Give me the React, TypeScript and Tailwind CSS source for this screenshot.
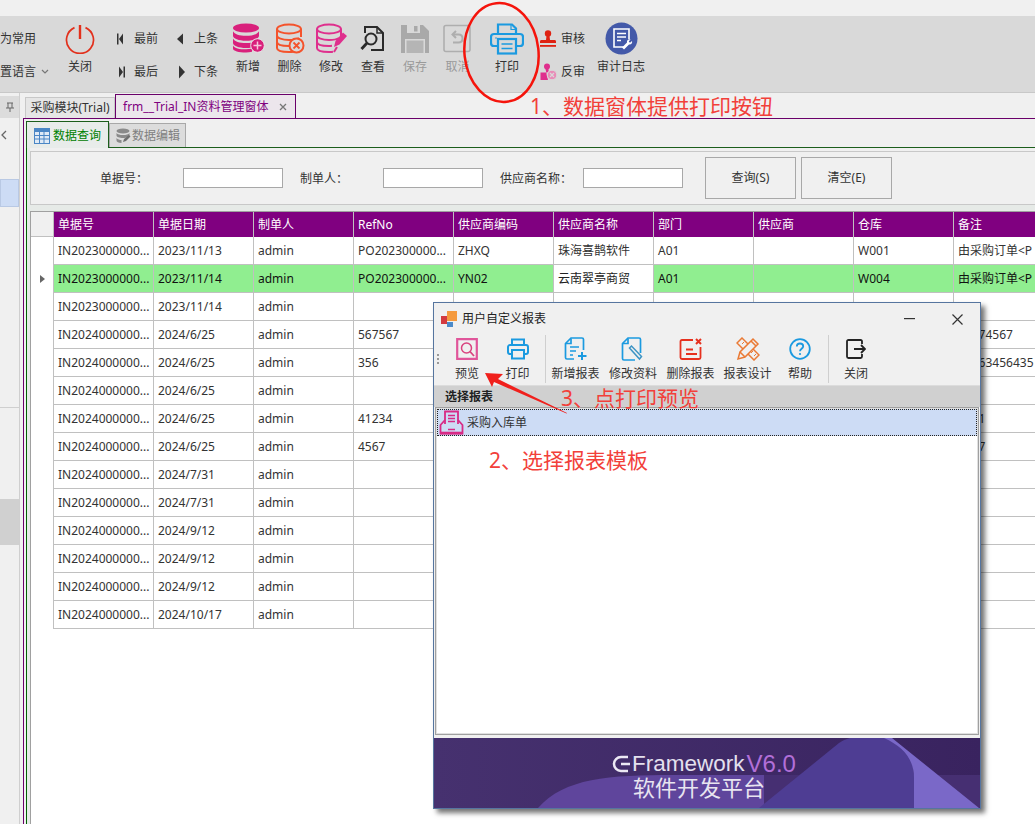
import type { ReactNode } from "react"

const COLS = ["单据号", "单据日期", "制单人", "RefNo", "供应商编码", "供应商名称", "部门", "供应商", "仓库", "备注"]
const ID23 = "IN2023000000..."
const ID24 = "IN2024000000..."
const PO = "PO202300000..."

const ROWS: string[][] = [
  [ID23, "2023/11/13", "admin", PO, "ZHXQ", "珠海喜鹊软件", "A01", "", "W001", "由采购订单<P"],
  [ID23, "2023/11/14", "admin", PO, "YN02", "云南翠亭商贸", "A01", "", "W004", "由采购订单<P"],
  [ID23, "2023/11/14", "admin", "", "", "云南翠亭商贸", "", "云南翠亭", "", ""],
  [ID24, "2024/6/25", "admin", "567567", "", "", "", "", "", "45674567"],
  [ID24, "2024/6/25", "admin", "356", "", "", "", "", "", "24563456435"],
  [ID24, "2024/6/25", "admin", "", "", "", "", "", "", ""],
  [ID24, "2024/6/25", "admin", "41234", "", "", "", "", "", "1231"],
  [ID24, "2024/6/25", "admin", "4567", "", "", "", "", "", "4567"],
  [ID24, "2024/7/31", "admin", "", "", "", "", "", "", ""],
  [ID24, "2024/7/31", "admin", "", "", "", "", "", "", ""],
  [ID24, "2024/9/12", "admin", "", "", "", "", "", "", ""],
  [ID24, "2024/9/12", "admin", "", "", "", "", "", "", ""],
  [ID24, "2024/9/12", "admin", "", "", "", "", "", "", ""],
  [ID24, "2024/10/17", "admin", "", "", "", "", "", "", ""],
]

function DbStack({ fill }: { fill: string }) {
  return (
    <g fill={fill}>
      <ellipse cx="14" cy="5" rx="13" ry="4.6" />
      <path d="M1 8.2c1.5 3 6.5 4.6 13 4.6s11.500-1.600 13-4.600v4.600c0 2.800-5.800 5-13 5s-13-2.200-13-5z" />
      <path d="M1 15.500c1.500 3 6.500 4.600 13 4.600s11.500-1.600 13-4.600v4.600c0 2.800-5.800 5-13 5s-13-2.200-13-5z" />
      <path d="M1 22.500c1.500 3 6.500 3.800 13 3.800 2 0 4-.2 6-.5v3c-2 .4-4 .7-6 .7-7.200 0-13-1.500-13-4z" />
    </g>
  )
}

function DbOutline({ color }: { color: string }) {
  return (
    <g fill="none" stroke={color} strokeWidth="2">
      <ellipse cx="14" cy="6" rx="12" ry="4.500" />
      <path d="M2 6v19c0 2.500 5 4 12 4 1.500 0 3-.1 4-.3M26 6v8M2 12.500c0 2.500 5 4.500 12 4.500 4 0 8-.7 10-2M2 19c0 2.500 5 4 12 4 1 0 2-.1 3-.2" />
    </g>
  )
}

const icons: Record<string, ReactNode> = {
  power: (
    <svg width="30" height="30" viewBox="0 0 30 30" fill="none" stroke="#e2301c">
      <path d="M9.500 3.600a13.500 13.500 0 1 0 11 0" strokeWidth="1.700" />
      <path d="M15 1v14" strokeWidth="2.400" />
    </svg>
  ),
  dbAdd: (
    <svg width="33" height="31" viewBox="0 0 33 31">
      <DbStack fill="#d9207c" />
      <circle cx="25.500" cy="22.500" r="6.800" fill="#d9207c" stroke="#e8e8e8" strokeWidth="1" />
      <path d="M25.500 18.500v8M21.500 22.500h8" stroke="#f5c8dd" strokeWidth="1.500" />
    </svg>
  ),
  dbDel: (
    <svg width="30" height="31" viewBox="0 0 30 31">
      <DbOutline color="#f4532c" />
      <circle cx="21.500" cy="22.500" r="7" fill="#d9d9d9" stroke="#f4532c" strokeWidth="2" />
      <path d="M18.500 19.500l6 6M24.500 19.500l-6 6" stroke="#f4532c" strokeWidth="1.800" />
    </svg>
  ),
  dbEdit: (
    <svg width="33" height="31" viewBox="0 0 33 31">
      <DbOutline color="#df2f8d" />
      <path d="M19 24l1.500-6L28 9.500l4 3.500-7.500 8.500z" fill="#df2f8d" />
      <path d="M19 29l3-5" stroke="#df2f8d" strokeWidth="2" />
    </svg>
  ),
  view: (
    <svg width="26" height="28" viewBox="0 0 26 28" fill="none" stroke="#2a2a2a" strokeWidth="2">
      <path d="M5 8V2h12l6 6v17H11" />
      <path d="M17 2v6h6" strokeWidth="1.500" />
      <circle cx="11" cy="14" r="5.500" />
      <path d="M7 18l-5.500 6" strokeWidth="2.800" />
    </svg>
  ),
  save: (
    <svg width="30" height="30" viewBox="0 0 30 30">
      <path d="M1 1h22l6 6v22H1z" fill="#a9a9a9" />
      <rect x="7" y="1" width="13" height="8" fill="#d9d9d9" />
      <rect x="14" y="2" width="3.500" height="5.500" fill="#a9a9a9" />
      <rect x="5" y="15" width="20" height="14" fill="#d9d9d9" />
      <rect x="6.500" y="16.500" width="17" height="12.500" fill="#b5b5b5" />
    </svg>
  ),
  undo: (
    <svg width="29" height="29" viewBox="0 0 29 29" fill="none" stroke="#aeaeae">
      <rect x="1" y="1.500" width="26" height="26" rx="2" strokeWidth="1.600" />
      <path d="M13 7l-3.500 3.500L13 14" strokeWidth="2" />
      <path d="M10 10.500h5.500c2.500 0 4 1.800 4 4s-1.500 4-4 4H10" strokeWidth="2" />
    </svg>
  ),
  print: (
    <svg width="34" height="32" viewBox="0 0 34 32" fill="none" stroke="#1b9ae0" strokeWidth="2.200">
      <path d="M8 11V1.500h14l4 4V11" />
      <path d="M21 2v4.500h5" strokeWidth="1.200" />
      <path d="M8 23H4c-1.700 0-3-1.300-3-3v-6c0-1.700 1.300-3 3-3h26c1.700 0 3 1.300 3 3v6c0 1.700-1.300 3-3 3h-4" />
      <rect x="8" y="16" width="18" height="14.500" />
      <path d="M11.500 21h11M11.500 25.500h11" strokeWidth="1.500" />
      <circle cx="6" cy="15" r=".8" fill="#1b9ae0" stroke="none" />
    </svg>
  ),
  stamp: (
    <svg width="20" height="18" viewBox="0 0 20 18">
      <circle cx="10" cy="3.500" r="3.200" fill="#df2212" />
      <path d="M8.500 6h3l.5 4h4.500c1 0 1.500.6 1.500 1.500V13H2v-1.500c0-.9.500-1.500 1.500-1.500H8z" fill="#df2212" />
      <rect x="2" y="15" width="16" height="1.800" fill="#df2212" />
    </svg>
  ),
  unstamp: (
    <svg width="20" height="18" viewBox="0 0 20 18">
      <circle cx="9" cy="3.500" r="3" fill="#df2f8d" />
      <path d="M7.500 6h3l.3 3.500H2.500v1V17h7.500z" fill="#df2f8d" />
      <circle cx="14" cy="12" r="4.800" fill="#e98bb8" stroke="#d9d9d9" />
      <path d="M12 10l4 4M16 10l-4 4" stroke="#d9d9d9" strokeWidth="1.200" />
    </svg>
  ),
  audit: (
    <svg width="33" height="33" viewBox="0 0 33 33">
      <circle cx="16.500" cy="16.500" r="16" fill="#4359a9" />
      <path d="M20 25H9V7h15v10" fill="none" stroke="#fff" strokeWidth="1.600" />
      <path d="M12 11.500h9M12 15h9M12 18.500h4" stroke="#fff" strokeWidth="1.300" />
      <path d="M17 25.500l5-5c-.5-2 1.500-3.800 3.500-3l-1.800 2 1.300 1.300 2-1.800c.7 2-1 4-3 3.500l-5 5z" fill="#fff" />
    </svg>
  ),
  preview: (
    <svg width="22" height="22" viewBox="0 0 22 22" fill="none" stroke="#e0559a">
      <path d="M1.200 1.200h19.600v19.600H1.200z" strokeWidth="2.200" />
      <circle cx="10.500" cy="10" r="5" strokeWidth="1.500" stroke="#d9437f" />
      <path d="M14 13.500l4 4.500" strokeWidth="1.800" stroke="#d9437f" />
    </svg>
  ),
  printSmall: (
    <svg width="22" height="22" viewBox="0 0 22 22" fill="none" stroke="#1b9ae0" strokeWidth="2">
      <path d="M5 7V1.500h12V7" />
      <path d="M5 16H3c-1.100 0-2-.9-2-2V9c0-1.100.9-2 2-2h16c1.100 0 2 .9 2 2v5c0 1.100-.9 2-2 2h-2" />
      <rect x="5" y="12" width="12" height="8.500" />
    </svg>
  ),
  docAdd: (
    <svg width="24" height="24" viewBox="0 0 24 24" fill="none" stroke="#1b9ae0" strokeWidth="1.700">
      <path d="M10 22H3c-1 0-1.500-.5-1.500-1.500V6.500L7 1h11c1 0 1.500.5 1.500 1.500V13" />
      <path d="M7 1.500v5H2" />
      <path d="M6 10h9M6 14h6M6 18h3" />
      <path d="M18 15v8M14 19h8.500" strokeWidth="2" />
    </svg>
  ),
  docEdit: (
    <svg width="24" height="24" viewBox="0 0 24 24" fill="none" stroke="#1b9ae0" strokeWidth="1.700">
      <path d="M14 23H3c-1 0-1.500-.5-1.500-1.500V6.500L7 1h11c1 0 1.500.5 1.500 1.500V16" />
      <path d="M7 1.500v5H2" />
      <path d="M8.500 11l2-2 10 10.500-2 2.500z" strokeWidth="1.500" stroke="#3d94c4" />
    </svg>
  ),
  docDel: (
    <svg width="24" height="22" viewBox="0 0 24 22" fill="none" stroke="#e6301e" strokeWidth="1.800">
      <path d="M14 2H3c-1 0-1.500.5-1.500 1.500v16c0 1 .5 1.500 1.500 1.500h17c1 0 1.500-.5 1.500-1.500V9" />
      <path d="M7 11.500h7M7 16h11" />
      <path d="M17 1l5 5M22 1l-5 5" strokeWidth="2" />
    </svg>
  ),
  design: (
    <svg width="24" height="24" viewBox="0 0 24 24" fill="none" stroke="#ea7a35" strokeWidth="1.500">
      <path d="M6 1l17 17-5 5L1 6z" />
      <path d="M6 7l2-2M9 10l2-2M12 13l2-2M15 16l2-2M18 19l2-2" strokeWidth="1" />
      <path d="M2 22l2-7L17 2l5 5L9 20z" fill="#f0f0f0" />
      <path d="M15 4l5 5M4 15l5 5" />
    </svg>
  ),
  help: (
    <svg width="22" height="22" viewBox="0 0 22 22" fill="none" stroke="#1b9ae0">
      <circle cx="11" cy="11" r="9.800" strokeWidth="1.800" />
      <path d="M7.800 8.500c0-2 1.400-3 3.200-3s3.200 1.100 3.200 2.800c0 2.500-3.200 2.500-3.200 5" strokeWidth="1.800" />
      <circle cx="11" cy="16" r="1.100" fill="#1b9ae0" stroke="none" />
    </svg>
  ),
  exit: (
    <svg width="20" height="20" viewBox="0 0 20 20" fill="none" stroke="#222" strokeWidth="1.800">
      <path d="M16 5V2.500c0-.8-.5-1.500-1.500-1.500H2.500C1.600 1 1 1.600 1 2.500v15c0 .9.600 1.500 1.500 1.500h12c1 0 1.500-.7 1.500-1.500V15" />
      <path d="M8 10h11M15 6l4 4-4 4" />
    </svg>
  ),
}

function NavIcon({ kind }: { kind: "first" | "prev" | "last" | "next" }) {
  return (
    <svg width="14" height="14" viewBox="0 0 14 14" fill="#333" className="shrink-0">
      {kind === "first" && <path d="M5 1.500h1.500v11H5zM11 1.500v11L7 7z" />}
      {kind === "prev" && <path d="M10 1.500v11L4 7z" />}
      {kind === "last" && <path d="M11.500 1.500H13v11h-1.500zM7 1.500v11l4-5.500z" />}
      {kind === "next" && <path d="M6 0.500v13L12 7z" />}
    </svg>
  )
}

function ToolBtn({ icon, label, w = "w-[42px]", muted }: { icon: ReactNode; label: string; w?: string; muted?: boolean }) {
  return (
    <div className={`flex shrink-0 flex-col items-center pt-[7px] ${w}`}>
      <div className="flex h-[31px] items-center justify-center">{icon}</div>
      <span className={`mt-[5px] whitespace-nowrap leading-[16px] ${muted ? "text-[#9a9a9a]" : "text-[#333]"}`}>{label}</span>
    </div>
  )
}

function NavBtn({ kind, label, gap = "gap-[7px]" }: { kind: "first" | "prev" | "last" | "next"; label: string; gap?: string }) {
  return (
    <div className={`flex h-[33px] items-center ${gap}`}>
      <NavIcon kind={kind} />
      <span className="leading-[16px] text-[#333]">{label}</span>
    </div>
  )
}

function Toolbar() {
  return (
    <div className="flex h-[77px] shrink-0 items-start border-b border-[#c8c8c8] bg-[#d9d9d9]">
      <div className="w-[59px] shrink-0 overflow-hidden pt-[6px]">
        <div className="flex h-[33px] items-center whitespace-nowrap leading-[16px] text-[#333]">为常用</div>
        <div className="flex h-[33px] items-center whitespace-nowrap leading-[16px] text-[#333]">
          置语言
          <svg width="8" height="6" viewBox="0 0 8 6" fill="none" stroke="#777" strokeWidth="1.200" className="ml-[5px]">
            <path d="M1 1l3 3 3-3" />
          </svg>
        </div>
      </div>
      <ToolBtn icon={icons.power} label="关闭" />
      <div className="ml-[11px] grid w-[115px] shrink-0 grid-cols-[61px_54px] pt-[6px]">
        <NavBtn kind="first" label="最前" gap="gap-[8px]" />
        <NavBtn kind="prev" label="上条" />
        <NavBtn kind="last" label="最后" gap="gap-[8px]" />
        <NavBtn kind="next" label="下条" />
      </div>
      <ToolBtn icon={icons.dbAdd} label="新增" />
      <ToolBtn icon={icons.dbDel} label="删除" w="w-[41px]" />
      <ToolBtn icon={icons.dbEdit} label="修改" />
      <ToolBtn icon={icons.view} label="查看" />
      <ToolBtn icon={icons.save} label="保存" muted />
      <ToolBtn icon={icons.undo} label="取消" w="w-[43px]" muted />
      <ToolBtn icon={icons.print} label="打印" w="w-[56px]" />
      <div className="ml-[3px] w-[59px] shrink-0 pt-[6px]">
        <div className="flex h-[33px] items-center gap-[3px]">
          {icons.stamp}
          <span className="leading-[16px] text-[#333]">审核</span>
        </div>
        <div className="flex h-[33px] items-center gap-[3px]">
          {icons.unstamp}
          <span className="leading-[16px] text-[#333]">反审</span>
        </div>
      </div>
      <ToolBtn icon={icons.audit} label="审计日志" w="w-[48px]" />
    </div>
  )
}

function SidePanel() {
  return (
    <div className="flex w-[20px] shrink-0 flex-col border-r border-[#cfcfcf] bg-[#f0f0f0]">
      <div className="mt-[3px] flex h-[22px] items-center justify-center bg-[#dcdcdc]">
        <svg width="10" height="10" viewBox="0 0 10 10" fill="none" stroke="#666">
          <path d="M2 1h6M3 1v5M7 1v5M1 6h8M5 6v4" />
        </svg>
      </div>
      <div className="flex h-[34px] items-center pl-[1px]">
        <svg width="6" height="10" viewBox="0 0 6 10" fill="none" stroke="#666" strokeWidth="1.300">
          <path d="M5 1L1 5l4 4" />
        </svg>
      </div>
      <div className="mt-[27px] h-[28px] border border-[#b9c9e4] bg-[#cddcf5]" />
      <div className="mt-[200px] h-px bg-[#cfcfcf]" />
      <div className="mt-[91px] h-[46px] bg-[#d0d0d0]" />
    </div>
  )
}

function Grid() {
  return (
    <div className="min-h-0 flex-1 border-l border-t border-[#a0a0a0] bg-white">
      <div className="flex h-[25px]">
        <div className="w-[23px] shrink-0 border-r border-b border-[#c0c0c0] bg-[#f0f0f0]" />
        {COLS.map((c) => (
          <div key={c} className="flex w-[100px] shrink-0 items-center border-r border-[#c0c0c0] bg-[#800080] pl-[4px] text-white">
            {c}
          </div>
        ))}
      </div>
      {ROWS.map((r, i) => (
        <div key={i} className="flex h-[28px]">
          <div className="flex w-[23px] shrink-0 items-center justify-center border-r border-[#c0c0c0]">
            {i === 1 && (
              <svg width="5" height="8" viewBox="0 0 5 8" fill="#666">
                <path d="M0 0l5 4-5 4z" />
              </svg>
            )}
          </div>
          {r.map((v, j) => (
            <div
              key={j}
              className={`flex w-[100px] shrink-0 items-center overflow-hidden whitespace-nowrap border-r border-b border-[#c0c0c0] pl-[4px] ${
                i === 2 && j >= 5 ? "pt-[4px]" : "pt-px"
              } ${i === 1 ? (j === 5 ? "bg-white text-[#222]" : "bg-[#90ee90] text-[#111]") : "text-[#333]"}`}
            >
              {v}
            </div>
          ))}
        </div>
      ))}
    </div>
  )
}

function SearchPanel() {
  return (
    <div className="flex h-[54px] shrink-0 items-center whitespace-nowrap border-y border-l border-[#c8c8c8] bg-[#f0f0f0] pl-[69px] text-[#333]">
      <span className="w-[83px] shrink-0 pt-px">单据号：</span>
      <div className="h-[20px] w-[100px] shrink-0 border border-[#a8a8a8] bg-white" />
      <span className="ml-[17px] w-[83px] shrink-0 pt-px">制单人：</span>
      <div className="h-[20px] w-[100px] shrink-0 border border-[#a8a8a8] bg-white" />
      <span className="ml-[17px] w-[83px] shrink-0 pt-px">供应商名称：</span>
      <div className="h-[20px] w-[100px] shrink-0 border border-[#a8a8a8] bg-white" />
      <div className="ml-[22px] flex h-[42px] w-[91px] shrink-0 items-center justify-center border border-[#a8a8a8]">查询(S)</div>
      <div className="ml-[5px] flex h-[42px] w-[91px] shrink-0 items-center justify-center border border-[#a8a8a8]">清空(E)</div>
    </div>
  )
}

function Workspace() {
  return (
    <div className="ml-[3px] flex min-w-0 flex-1 flex-col">
      {/* module tabs */}
      <div className="flex h-[25px] shrink-0 items-end pl-[2px]">
        <div className="flex h-[21px] w-[90px] items-center justify-center border-x border-t border-[#c8c8c8] bg-[#e6e6e6] text-[#333]">
          采购模块(Trial)
        </div>
        <div className="flex h-[24px] w-[181px] items-center border-x border-t border-[#6a006a] bg-[#ece6ec] pl-[7px] text-[#800080]">
          <span className="whitespace-nowrap">frm__Trial_IN资料管理窗体</span>
          <svg width="8" height="8" viewBox="0 0 8 8" stroke="#777" strokeWidth="1.300" className="ml-[11px]">
            <path d="M1 1l6 6M7 1L1 7" />
          </svg>
        </div>
      </div>
      <div className="flex min-h-0 flex-1 flex-col border-l border-t border-[#6a006a] pl-[2px] pt-[2px]">
        <div className="flex min-h-0 flex-1 flex-col border-l border-[#006400]">
          {/* sub tabs */}
          <div className="flex h-[27px] shrink-0 items-end border-b border-[#1c5e1c]">
            <div className="-mb-px -ml-px flex h-[27px] w-[83px] items-center gap-[3px] border-x border-t border-[#1c5e1c] bg-[#e8ecea] pl-[7px] pt-px text-[#008000]">
              <svg width="16" height="16" viewBox="0 0 16 16" className="shrink-0">
                <rect width="16" height="16" fill="#4a86c5" />
                <path d="M1 4h14v11H1z" fill="#dfeaf6" />
                <path d="M5.500 4v11M10 4v11M1 7.500h14M1 11h14" stroke="#4a86c5" />
              </svg>
              数据查询
            </div>
            <div className="flex h-[24px] w-[77px] items-center gap-[1px] border-x border-t border-[#a8a8a8] bg-[#dcdcdc] pl-[5px] text-[#808080]">
              <svg width="16" height="16" viewBox="0 0 16 16" className="shrink-0">
                <ellipse cx="8" cy="3" rx="6.500" ry="2.500" fill="#8a8a8a" />
                <path d="M1.500 5c1 1.500 3.500 2 6.500 2s5.500-.5 6.500-2v2.500c0 1.500-3 2.500-6.500 2.500s-6.500-1-6.500-2.500z" fill="#8a8a8a" />
                <path d="M1.500 10c1 1.500 3.500 2 5 2v3c-3 0-5-1-5-2.500z" fill="#8a8a8a" />
                <path d="M8 14l1-3 5-4 1.500 1.500-4.500 4.500z" fill="#6f6f6f" />
              </svg>
              数据编辑
            </div>
          </div>
          {/* tab body */}
          <div className="flex min-h-0 flex-1 flex-col bg-[#e6eae7] pl-[3px]">
            <div className="h-[3px] shrink-0 bg-[#f0f0f0]" />
            <SearchPanel />
            <div className="h-[6px] shrink-0" />
            <Grid />
          </div>
        </div>
      </div>
    </div>
  )
}

function DlgBtn({ icon, label, w }: { icon: ReactNode; label: string; w: string }) {
  return (
    <div className={`flex shrink-0 flex-col items-center pt-[2px] ${w}`}>
      <div className="flex h-[24px] items-center justify-center">{icon}</div>
      <span className="mt-[5px] whitespace-nowrap leading-[16px] text-[#333]">{label}</span>
    </div>
  )
}

function Banner() {
  return (
    <div className="relative h-[70px] shrink-0 overflow-hidden bg-[#3f2a6b]">
      <svg width="548" height="70" viewBox="0 0 548 70" className="absolute inset-0">
        <defs>
          <linearGradient id="bg" x1="0" x2="1">
            <stop offset="0" stopColor="#46316f" />
            <stop offset="1" stopColor="#39235f" />
          </linearGradient>
        </defs>
        <rect width="548" height="70" fill="url(#bg)" />
        <rect x="300" y="37" width="248" height="33" fill="#462f72" />
        <path d="M104 70C130 40 175 37 240 37c40 0 70 0 90 0v33z" fill="#5f459c" />
        <path d="M325 70L405 5C418-4 440-4 458 2c16 8 22 20 22 38v30z" fill="#4e3d93" />
        <path d="M450 0h8L545 70H480V40c0-20-12-32-30-40z" fill="#7a68c8" />
      </svg>
      <div className="absolute inset-0 flex flex-col items-center pr-[6px] pt-[16px]">
        <div className="flex h-[20px] items-center leading-[20px]">
          <svg width="20" height="18" viewBox="0 0 20 18" fill="none" stroke="#ece8f4" strokeWidth="2.500">
            <path d="M16 2H9a7 7 0 0 0 0 14h7" />
            <path d="M18 9h-9" />
          </svg>
          <span className="font-['Liberation_Sans',sans-serif] text-[22.5px] text-[#e4e0ee]">Framework</span>
          <span className="ml-[2px] font-['Liberation_Sans',sans-serif] text-[24px] text-[#b26fd8]">V6.0</span>
        </div>
        <div className="mr-[10px] mt-[1px] text-[22px] leading-[24px] text-[#e8e4f0]">软件开发平台</div>
      </div>
    </div>
  )
}

function ReportDialog() {
  return (
    <div className="absolute left-[433px] top-[302px] flex h-[507px] w-[548px] flex-col border border-[#56759f] bg-[#f0f0f0] shadow-[4px_4px_5px_rgba(0,0,0,0.55)]">
      <div className="flex h-[32px] shrink-0 items-center pl-[7px] pr-[17px]">
        <svg width="17" height="17" viewBox="0 0 17 17" className="shrink-0">
          <rect x="6" width="10" height="10" fill="#f59a3e" />
          <rect y="5" width="6" height="8" fill="#d33a3f" />
          <rect x="6" y="11" width="6" height="5" fill="#4b8ac9" />
        </svg>
        <span className="ml-[4px] text-[#222]">用户自定义报表</span>
        <svg width="11" height="2" viewBox="0 0 11 2" className="ml-auto" fill="#333">
          <rect width="11" height="1.200" />
        </svg>
        <svg width="11" height="11" viewBox="0 0 11 11" stroke="#333" strokeWidth="1.200" className="ml-[37px]">
          <path d="M.5.500l10 10M10.500.500l-10 10" />
        </svg>
      </div>
      <div className="flex h-[51px] shrink-0 items-start border-b border-[#dcdcdc] pl-[3px]">
        <div className="mt-[19px] flex h-[10px] w-[2px] flex-col justify-between">
          <div className="h-[2px] bg-[#999]" />
          <div className="h-[2px] bg-[#999]" />
          <div className="h-[2px] bg-[#999]" />
        </div>
        <div className="ml-[3px] flex">
          <DlgBtn icon={icons.preview} label="预览" w="w-[50px]" />
          <DlgBtn icon={icons.printSmall} label="打印" w="w-[51px]" />
        </div>
        <div className="ml-[2px] h-[48px] w-px shrink-0 bg-[#cfcfcf]" />
        <div className="ml-px flex">
          <DlgBtn icon={icons.docAdd} label="新增报表" w="w-[57px]" />
          <DlgBtn icon={icons.docEdit} label="修改资料" w="w-[58px]" />
          <DlgBtn icon={icons.docDel} label="删除报表" w="w-[57px]" />
          <DlgBtn icon={icons.design} label="报表设计" w="w-[57px]" />
          <DlgBtn icon={icons.help} label="帮助" w="w-[48px]" />
        </div>
        <div className="ml-[4px] h-[48px] w-px shrink-0 bg-[#cfcfcf]" />
        <DlgBtn icon={icons.exit} label="关闭" w="ml-px w-[52px]" />
      </div>
      <div className="flex h-[21px] shrink-0 items-center bg-[#d0d0d0] pl-[11px] font-bold text-[#222]">选择报表</div>
      <div className="mx-px mb-[3px] min-h-0 flex-1 border border-[#a0a0a0] bg-white p-px outline outline-1 -outline-offset-2 outline-[#e0e0e0]">
        <div className="flex h-[27px] items-center border border-dotted border-[#222] bg-[#cddcf5] pl-px">
          <svg width="25" height="25" viewBox="0 0 25 25" fill="none" stroke="#d82a86" strokeWidth="1.800" className="shrink-0">
            <path d="M6 14V1.500h13V14" />
            <path d="M9 5.500h7M9 8.500h7M9 11.500h7" strokeWidth="1.300" />
            <path d="M6 10L1.500 15v8.500h22V15L19 10" />
            <path d="M1.500 23h22" strokeWidth="2.600" />
            <path d="M9 19.500h7" strokeWidth="1.500" />
          </svg>
          <span className="ml-[3px] pt-px text-[#333]">采购入库单</span>
        </div>
      </div>
      <Banner />
    </div>
  )
}

function Annotations() {
  return (
    <>
      <svg width="1035" height="824" viewBox="0 0 1035 824" fill="none" className="pointer-events-none absolute inset-0">
        <ellipse cx="501.500" cy="52.500" rx="37" ry="49.500" transform="rotate(-6 501.500 52.500)" stroke="#f5140c" strokeWidth="2.500" />
        <path d="M485 373l18 1-5 5 69 34-.5.500L494 382l-2 5z" fill="#f0201c" />
      </svg>
      <div className="absolute left-[530px] top-[93px] whitespace-nowrap text-[21px] leading-[26px] text-[#f2403a]">1、数据窗体提供打印按钮</div>
      <div className="absolute left-[561px] top-[385px] whitespace-nowrap text-[21px] leading-[26px] text-[#f2403a]">3、点打印预览</div>
      <div className="absolute left-[489px] top-[447px] whitespace-nowrap text-[21px] leading-[26px] text-[#f2403a]">2、选择报表模板</div>
    </>
  )
}

export default function App() {
  return (
    <div className="relative flex h-[824px] w-[1035px] flex-col overflow-hidden bg-[#f0f0f0] font-['Noto_Sans','Noto_Sans_CJK_SC',sans-serif] text-[12px]">
      <div className="h-[16px] shrink-0" />
      <Toolbar />
      <div className="flex min-h-0 flex-1">
        <SidePanel />
        <Workspace />
      </div>
      <ReportDialog />
      <Annotations />
    </div>
  )
}
